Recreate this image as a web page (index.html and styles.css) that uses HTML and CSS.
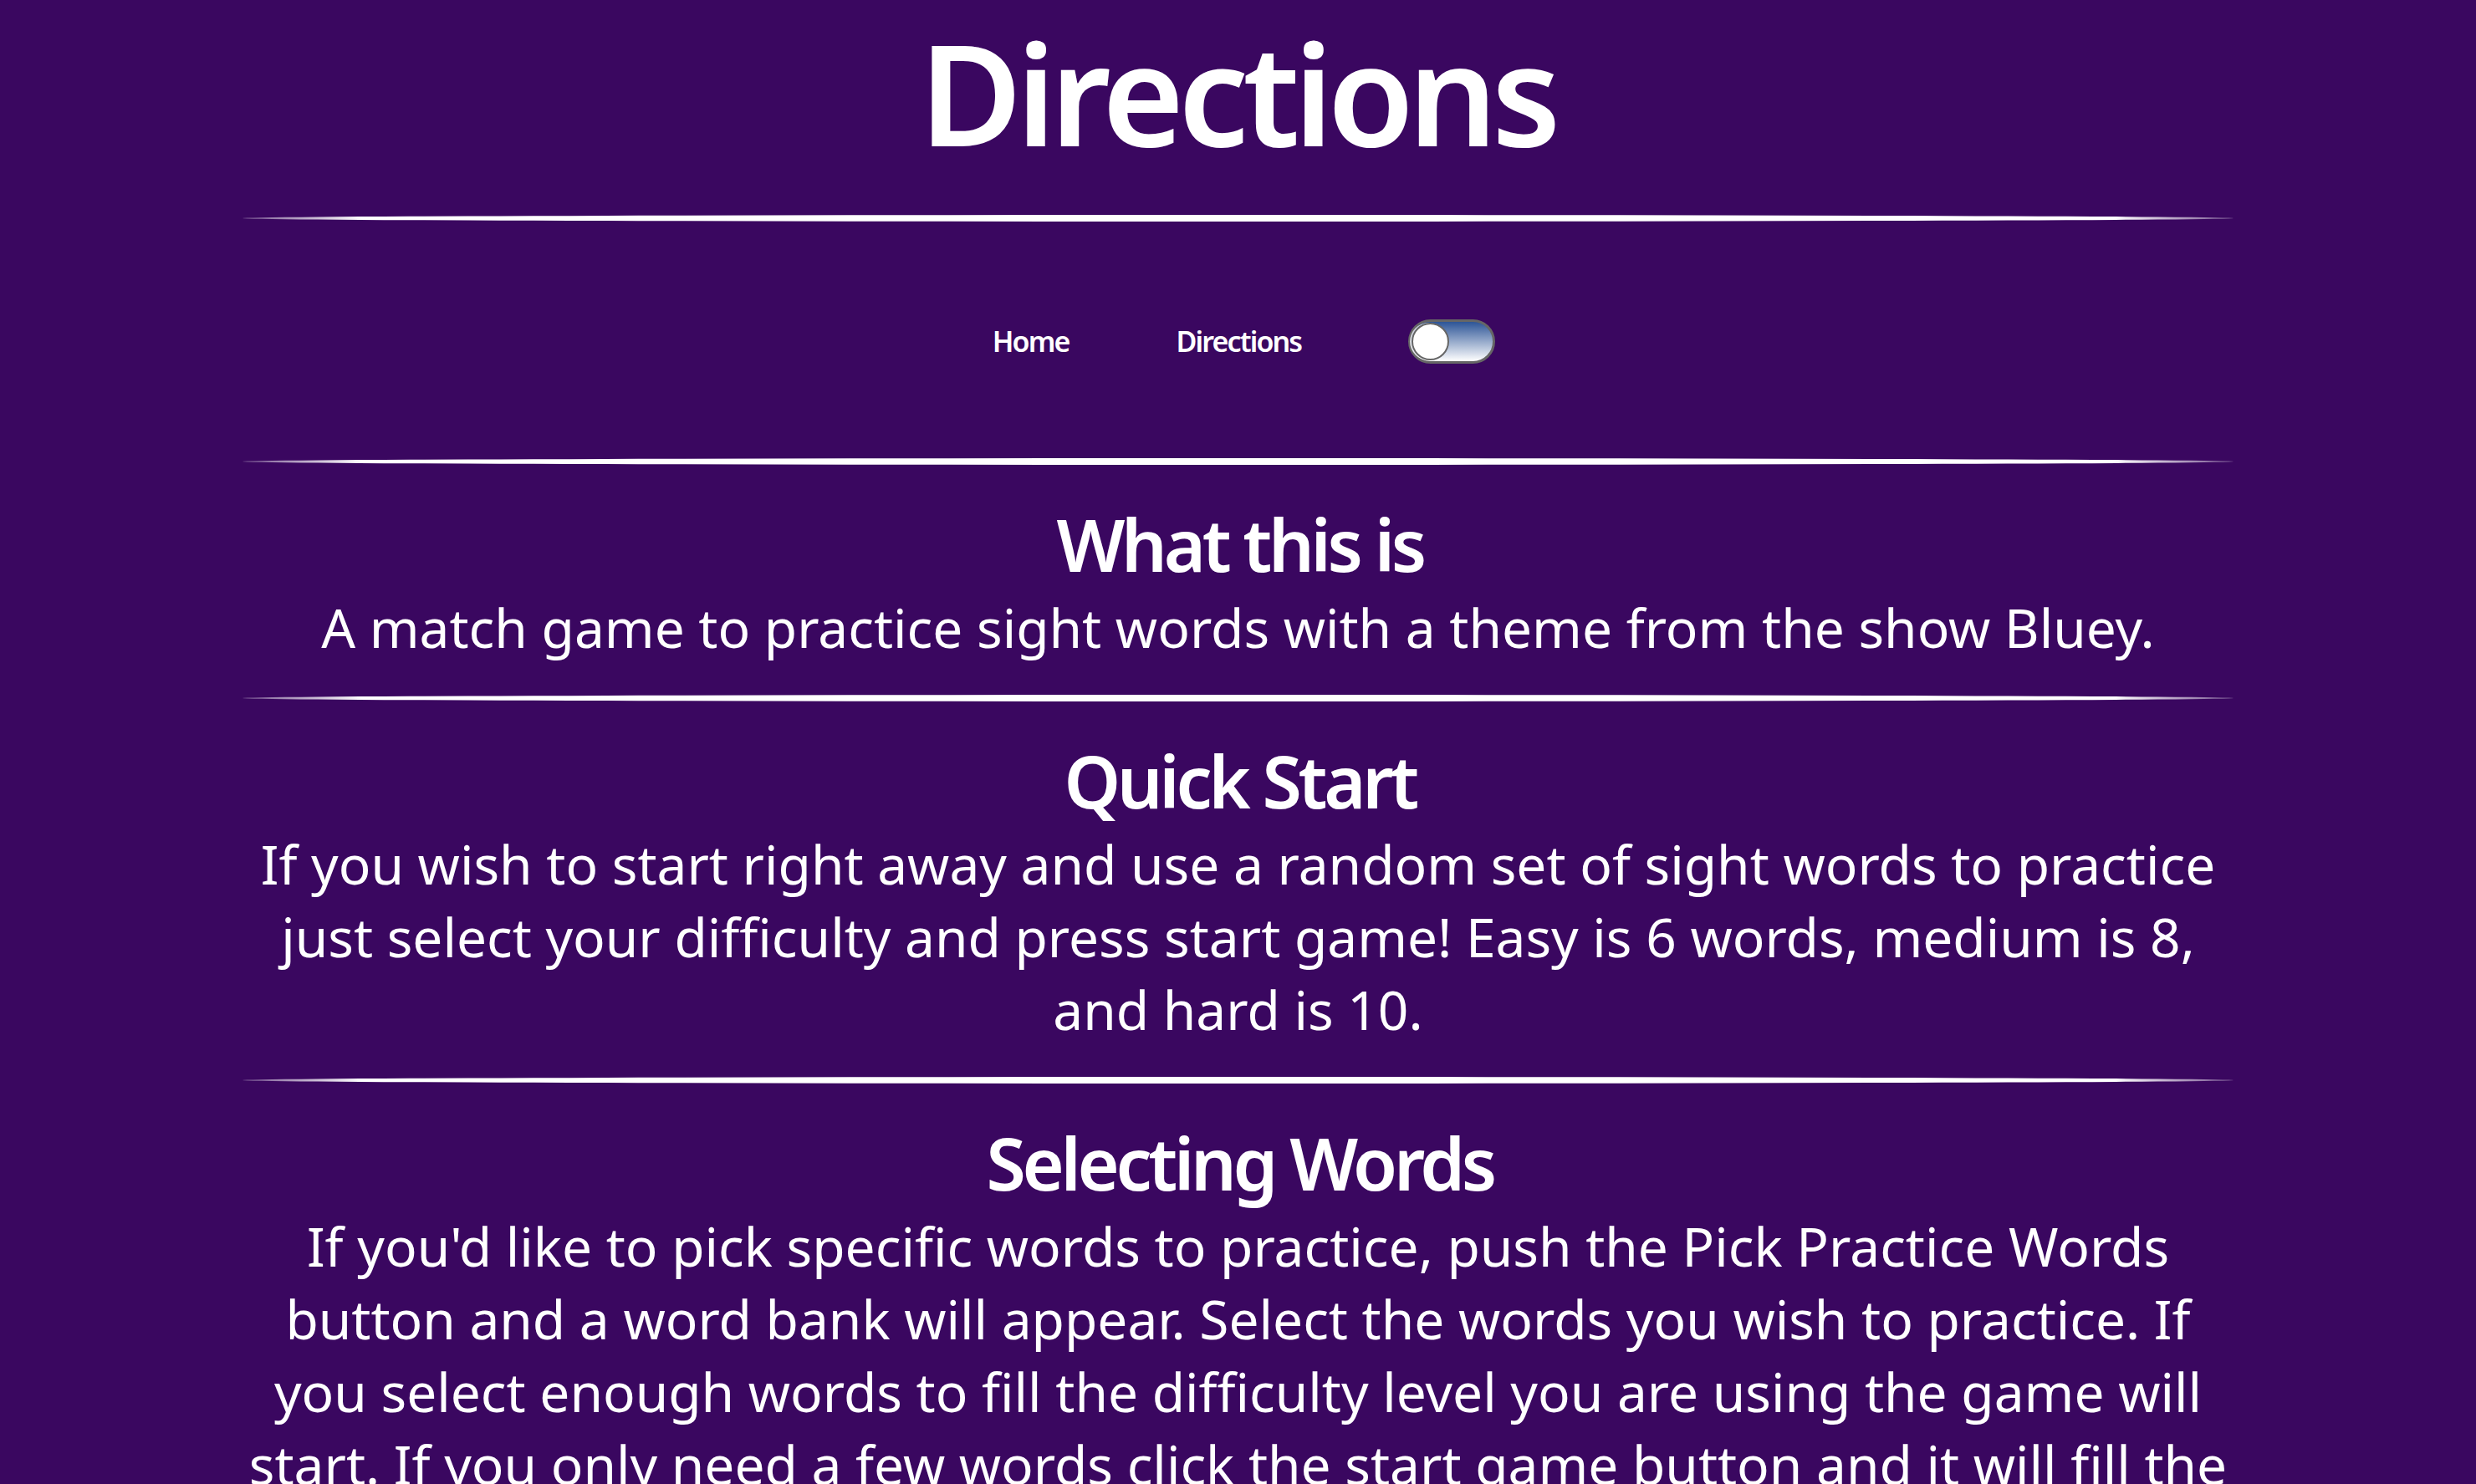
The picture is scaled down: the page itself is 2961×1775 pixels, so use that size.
FILE: index.html
```html
<!DOCTYPE html>
<html lang="en">
<head>
<meta charset="utf-8">
<title>Directions</title>
<link rel="stylesheet" href="styles.css">
</head>
<body>
<header class="site-header">
  <h1 class="page-title">Directions</h1>
  <hr class="divider">
  <nav class="main-nav">
    <a class="nav-link" href="#">Home</a>
    <a class="nav-link" href="#">Directions</a>
    <label class="switch">
      <input type="checkbox" class="switch-input">
      <span class="switch-track"><span class="switch-knob"></span></span>
    </label>
  </nav>
  <hr class="divider">
</header>
<main class="content">
  <section class="block">
    <h2 class="block-title">What this is</h2>
    <p class="block-text">A match game to practice sight words with a theme from the show Bluey.</p>
  </section>
  <hr class="divider">
  <section class="block">
    <h2 class="block-title">Quick Start</h2>
    <p class="block-text">If you wish to start right away and use a random set of sight words to practice just select your difficulty and press start game! Easy is 6 words, medium is 8, and hard is 10.</p>
  </section>
  <hr class="divider">
  <section class="block">
    <h2 class="block-title">Selecting Words</h2>
    <p class="block-text">If you'd like to pick specific words to practice, push the Pick Practice Words button and a word bank will appear. Select the words you wish to practice. If you select enough words to fill the difficulty level you are using the game will start. If you only need a few words click the start game button and it will fill the rest of the words in randomly for you.</p>
  </section>
</main>
</body>
</html>
```
FILE: styles.css
```css
html, body {
  margin: 0;
  padding: 0;
}
body {
  background: #3a0760;
  color: #ffffff;
  font-family: "Noto Sans", "Open Sans", sans-serif;
  overflow: hidden;
}
.site-header {
  display: flex;
  flex-direction: column;
  align-items: center;
}
.page-title {
  margin: 0;
  padding-right: 2px;
  font-size: 168px;
  font-weight: 600;
  letter-spacing: -0.043em;
  line-height: 219px;
  text-align: center;
}
.divider {
  width: 80.4%;
  height: 8px;
  margin: 0 auto;
  border: 0;
  border-radius: 50%;
  background: linear-gradient(to right, rgba(255,255,255,0.3), #ffffff 6%, #ffffff 94%, rgba(255,255,255,0.3));
}
.site-header .divider:first-of-type {
  margin-top: 38px;
}
.main-nav {
  display: flex;
  align-items: center;
  justify-content: center;
  gap: 128px;
  height: 283px;
  padding-top: 3px;
  padding-left: 14px;
  box-sizing: border-box;
}
.nav-link {
  color: #ffffff;
  text-decoration: none;
  font-weight: 600;
  font-size: 34px;
  letter-spacing: -0.055em;
}
.switch {
  display: inline-block;
  cursor: pointer;
}
.switch-input {
  display: none;
}
.switch-track {
  display: block;
  position: relative;
  width: 98px;
  height: 47px;
  border: 3px solid #666666;
  border-radius: 30px;
  background: linear-gradient(to bottom, #2d5597, #ffffff);
}
.switch-knob {
  position: absolute;
  left: 1px;
  top: 1px;
  width: 41px;
  height: 41px;
  border: 2px solid #666666;
  border-radius: 50%;
  background: #ffffff;
  box-shadow: -2px 0 0 rgba(255,255,255,0.7);
}
.content {
  display: flex;
  flex-direction: column;
  align-items: center;
}
.block {
  width: 80.4%;
  padding: 39px 0 37px;
  text-align: center;
}
.block-title {
  margin: 0;
  padding-left: 0.05em;
  font-size: 86px;
  font-weight: 600;
  letter-spacing: -0.05em;
  line-height: 1.3;
}
.block-text {
  margin: 0;
  font-size: 64px;
  line-height: 1.362;
}
```
